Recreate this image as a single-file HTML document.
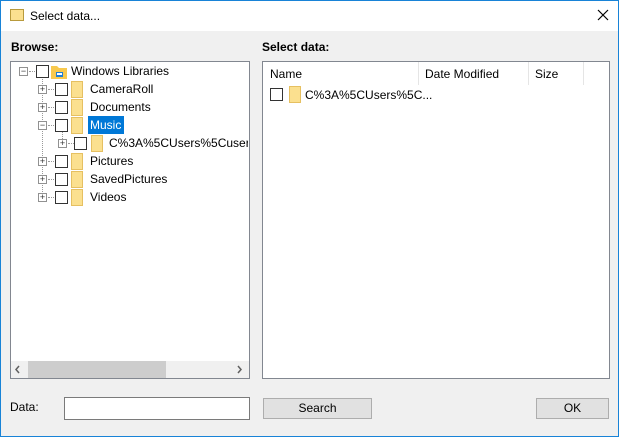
<!DOCTYPE html>
<html><head><style>
*{margin:0;padding:0;box-sizing:border-box}
body{width:619px;height:437px;background:#f0f0f0;font-family:"Liberation Sans",sans-serif;font-size:12px;color:#000;position:relative;overflow:hidden}
.a{position:absolute}
.win{left:0;top:0;width:619px;height:437px;border:1px solid #1883d7;}
.title{left:1px;top:1px;width:617px;height:30px;background:#fff}
.t{white-space:nowrap;line-height:14px}
.cb{width:13px;height:13px;border:1px solid #333;background:#fff}
.ex{width:9px;height:9px;border:1px solid #919191;background:#fff;font-size:9px;line-height:7px;text-align:center;color:#333}
.fd{width:12px;height:17px;background:#fbe08f;border:1px solid #e6c061;border-radius:0 0 0 0}
.hl{border-top:1px dotted #999}
.vl{border-left:1px dotted #999}
.btn{background:#e1e1e1;border:1px solid #adadad;text-align:center;line-height:18px}
</style></head><body>
<div class="a win"></div>
<div class="a title"></div>
<div class="a" style="left:10px;top:9px;width:14px;height:12px;background:#fbe08f;border:1px solid #b89a3c"></div>
<div class="a t" style="left:30px;top:9px">Select data...</div>
<svg class="a" style="left:597px;top:9px" width="12" height="12"><path d="M1 1L11 11M11 1L1 11" stroke="#000" stroke-width="1.2"/></svg>

<div class="a t" style="left:11px;top:40px;font-weight:bold">Browse:</div>
<div class="a t" style="left:262px;top:40px;font-weight:bold">Select data:</div>

<div class="a" style="left:10px;top:61px;width:240px;height:318px;background:#fff;border:1px solid #828790"></div>
<!-- tree -->
<div class="a vl" style="left:42px;top:77px;height:121px"></div>
<div class="a vl" style="left:62px;top:131px;height:12px"></div>
<div class="a ex" style="left:19px;top:67px">−</div>
<div class="a hl" style="left:29px;top:71px;width:6px"></div>
<div class="a cb" style="left:36px;top:65px"></div>
<svg class="a" style="left:51px;top:64px" width="16" height="15"><path d="M0 2h6l2 2h8v11H0z" fill="#f8c94e"/><rect x="5" y="8" width="7" height="5" fill="#1e7dd6"/><rect x="6" y="9" width="5" height="2" fill="#fff"/></svg>
<div class="a t" style="left:71px;top:64px">Windows Libraries</div>

<div class="a ex" style="left:38px;top:85px">+</div><div class="a hl" style="left:48px;top:89px;width:6px"></div>
<div class="a cb" style="left:55px;top:83px"></div><div class="a fd" style="left:71px;top:81px"></div>
<div class="a t" style="left:90px;top:82px">CameraRoll</div>

<div class="a ex" style="left:38px;top:103px">+</div><div class="a hl" style="left:48px;top:107px;width:6px"></div>
<div class="a cb" style="left:55px;top:101px"></div><div class="a fd" style="left:71px;top:99px"></div>
<div class="a t" style="left:90px;top:100px">Documents</div>

<div class="a ex" style="left:38px;top:121px">−</div><div class="a hl" style="left:48px;top:125px;width:6px"></div>
<div class="a cb" style="left:55px;top:119px"></div><div class="a fd" style="left:71px;top:117px"></div>
<div class="a" style="left:88px;top:116px;width:36px;height:18px;background:#0078d7"></div>
<div class="a t" style="left:90px;top:118px;color:#fff">Music</div>

<div class="a ex" style="left:58px;top:139px">+</div><div class="a hl" style="left:68px;top:143px;width:6px"></div>
<div class="a cb" style="left:74px;top:137px"></div><div class="a fd" style="left:91px;top:135px"></div>
<div class="a t" style="left:109px;top:136px;width:139px;overflow:hidden">C%3A%5CUsers%5Cuser%5C</div>

<div class="a ex" style="left:38px;top:157px">+</div><div class="a hl" style="left:48px;top:161px;width:6px"></div>
<div class="a cb" style="left:55px;top:155px"></div><div class="a fd" style="left:71px;top:153px"></div>
<div class="a t" style="left:90px;top:154px">Pictures</div>

<div class="a ex" style="left:38px;top:175px">+</div><div class="a hl" style="left:48px;top:179px;width:6px"></div>
<div class="a cb" style="left:55px;top:173px"></div><div class="a fd" style="left:71px;top:171px"></div>
<div class="a t" style="left:90px;top:172px">SavedPictures</div>

<div class="a ex" style="left:38px;top:193px">+</div><div class="a hl" style="left:48px;top:197px;width:6px"></div>
<div class="a cb" style="left:55px;top:191px"></div><div class="a fd" style="left:71px;top:189px"></div>
<div class="a t" style="left:90px;top:190px">Videos</div>

<!-- scrollbar -->
<div class="a" style="left:11px;top:361px;width:238px;height:17px;background:#f0f0f0"></div>
<div class="a" style="left:28px;top:361px;width:138px;height:17px;background:#cdcdcd"></div>
<svg class="a" style="left:14px;top:365px" width="8" height="9"><path d="M5 1L2 4.5L5 8" stroke="#606060" stroke-width="1.5" fill="none"/></svg>
<svg class="a" style="left:235px;top:365px" width="8" height="9"><path d="M3 1L6 4.5L3 8" stroke="#606060" stroke-width="1.5" fill="none"/></svg>

<!-- list -->
<div class="a" style="left:262px;top:61px;width:348px;height:318px;background:#fff;border:1px solid #828790"></div>
<div class="a" style="left:418px;top:62px;width:1px;height:23px;background:#e5e5e5"></div>
<div class="a" style="left:528px;top:62px;width:1px;height:23px;background:#e5e5e5"></div>
<div class="a" style="left:583px;top:62px;width:1px;height:23px;background:#e5e5e5"></div>
<div class="a t" style="left:270px;top:67px">Name</div>
<div class="a t" style="left:425px;top:67px">Date Modified</div>
<div class="a t" style="left:535px;top:67px">Size</div>
<div class="a cb" style="left:270px;top:88px"></div>
<div class="a fd" style="left:289px;top:86px"></div>
<div class="a t" style="left:305px;top:88px">C%3A%5CUsers%5C...</div>

<!-- bottom -->
<div class="a t" style="left:10px;top:400px">Data:</div>
<div class="a" style="left:64px;top:397px;width:186px;height:23px;background:#fff;border:1px solid #7a7a7a"></div>
<div class="a btn" style="left:263px;top:398px;width:109px;height:21px">Search</div>
<div class="a btn" style="left:536px;top:398px;width:73px;height:21px">OK</div>
</body></html>
